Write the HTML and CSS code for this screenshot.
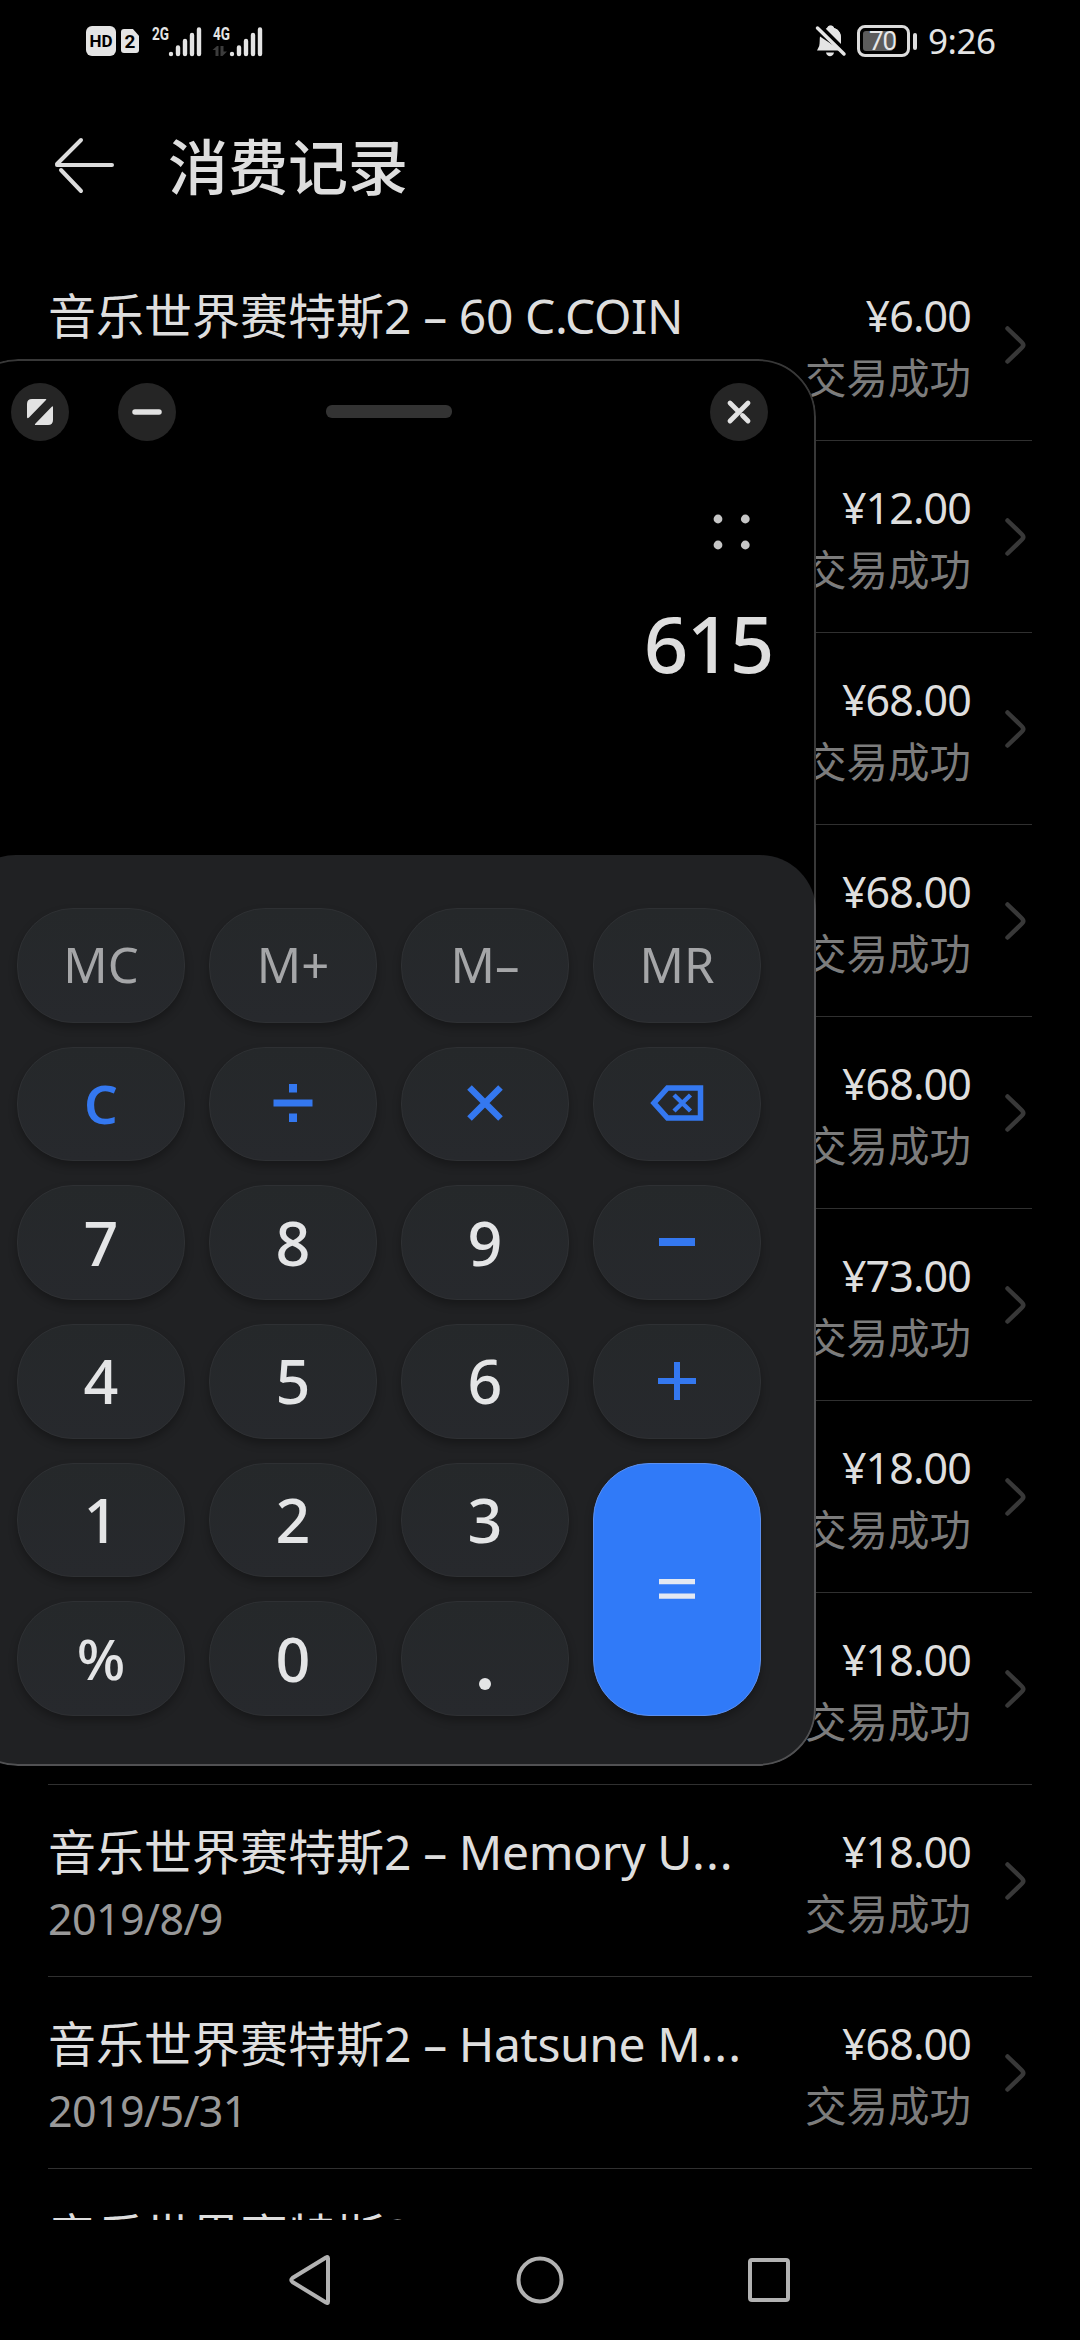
FILE: index.html
```html
<!DOCTYPE html>
<html lang="zh-CN">
<head>
<meta charset="utf-8">
<title>消费记录</title>
<link rel="stylesheet" href="styles.css">
</head>
<body>
<svg class="defs" width="0" height="0">
  <symbol id="chevron" viewBox="0 0 24 42"><path d="M4.500 4.500 19 18.500Q21.500 21 19 23.500L4.500 37.500" fill="none" stroke="currentColor" stroke-width="4.500" stroke-linecap="round"/></symbol>
</svg>
<div class="screen">
  <header class="status">
    <div class="status-left">
      <span class="hd">HD</span>
      <span class="sim">2</span>
      <svg class="signal" width="54" height="36" viewBox="0 0 54 36"><text class="net" x="2" y="17" textLength="17" lengthAdjust="spacingAndGlyphs">2G</text><g class="bars"><path d="M21 31v0M28 24.500V31M35 18V31M42 12V31M49 6.500V31"/></g></svg>
      <svg class="signal" width="54" height="36" viewBox="0 0 54 36"><text class="net" x="2" y="17" textLength="17" lengthAdjust="spacingAndGlyphs">4G</text><path d="M1.500 27 6 23h1.500v10H4.500v-6zM9.500 23v10h2l4.500-4.500h-3.500V23z" fill="#3c3c3c"/><g class="bars"><path d="M21 31v0M28 24.500V31M35 18V31M42 12V31M49 6.500V31"/></g></svg>
    </div>
    <div class="status-right">
      <svg width="32" height="34" viewBox="0 0 32 34"><path d="M9 6.500C10.500 5 11.500 4.500 12.500 4c.5-2 1.500-2.500 3-2.500s3 .5 3.500 2.500c5 1.500 7 5.500 7 10v5M5 12.500c-.5 2.500 0 6-.8 9.500L2 26.500h24zM11 28.500h8c-1 5-7 5-8 0z" fill="#e4e4e4"/><path d="M8.500 6.500 26 23V14c0-4.500-2-8.500-7-10-1-3-6-3-7 0z" fill="#e4e4e4"/><path d="M5 1.500 31 27.500" stroke="#000" stroke-width="3.500"/><path d="M2.500 4 29 30" stroke="#e4e4e4" stroke-width="3.500" stroke-linecap="round"/></svg>
      <div class="battery"><span class="level">70</span></div>
      <span class="tip"></span>
      <span class="clock">9:26</span>
    </div>
  </header>
  <div class="titlebar">
    <svg width="60" height="60" viewBox="0 0 60 60"><path d="M58 30H3M27 5 3 29M7 35 27 56" fill="none" stroke="#dcdcdc" stroke-width="4" stroke-linecap="round"/></svg>
    <h1>消费记录</h1>
  </div>
  <main class="list">
    <div class="row"><div class="item"><p class="name">音乐世界赛特斯<span class="latin">2 – 60 C.COIN</span></p></div><div class="pay"><p class="price">¥6.00</p><p class="state">交易成功</p></div><svg class="chev"><use href="#chevron"/></svg></div>
    <div class="row"><div class="item"></div><div class="pay"><p class="price">¥12.00</p><p class="state">交易成功</p></div><svg class="chev"><use href="#chevron"/></svg></div>
    <div class="row"><div class="item"></div><div class="pay"><p class="price">¥68.00</p><p class="state">交易成功</p></div><svg class="chev"><use href="#chevron"/></svg></div>
    <div class="row"><div class="item"></div><div class="pay"><p class="price">¥68.00</p><p class="state">交易成功</p></div><svg class="chev"><use href="#chevron"/></svg></div>
    <div class="row"><div class="item"></div><div class="pay"><p class="price">¥68.00</p><p class="state">交易成功</p></div><svg class="chev"><use href="#chevron"/></svg></div>
    <div class="row"><div class="item"></div><div class="pay"><p class="price">¥73.00</p><p class="state">交易成功</p></div><svg class="chev"><use href="#chevron"/></svg></div>
    <div class="row"><div class="item"></div><div class="pay"><p class="price">¥18.00</p><p class="state">交易成功</p></div><svg class="chev"><use href="#chevron"/></svg></div>
    <div class="row"><div class="item"></div><div class="pay"><p class="price">¥18.00</p><p class="state">交易成功</p></div><svg class="chev"><use href="#chevron"/></svg></div>
    <div class="row"><div class="item"><p class="name">音乐世界赛特斯<span class="latin">2 – Memory U<span class="dots">...</span></span></p><p class="date">2019/8/9</p></div><div class="pay"><p class="price">¥18.00</p><p class="state">交易成功</p></div><svg class="chev"><use href="#chevron"/></svg></div>
    <div class="row"><div class="item"><p class="name">音乐世界赛特斯<span class="latin">2 – Hatsune M<span class="dots">...</span></span></p><p class="date">2019/5/31</p></div><div class="pay"><p class="price">¥68.00</p><p class="state">交易成功</p></div><svg class="chev"><use href="#chevron"/></svg></div>
    <div class="row"><div class="item"><p class="name">音乐世界赛特斯<span class="latin">2 – H</span></p></div></div>
  </main>
  <nav class="nav">
    <svg width="50" height="60" viewBox="0 0 50 60"><path d="M42 8.500V51.500Q42 54 40 52.500L6.500 32Q4 30 6.500 28L40 7.500Q42 6 42 8.500z"/></svg>
    <svg width="60" height="60" viewBox="0 0 60 60"><circle cx="30" cy="30" r="21.500"/></svg>
    <svg width="50" height="60" viewBox="0 0 50 60"><rect x="6" y="10" width="38" height="40" rx="2"/></svg>
  </nav>

  <section class="calc">
    <div class="calc-head">
      <span class="round"><svg width="28" height="28" viewBox="0 0 28 28"><path d="M6 1H19.500Q21 1 20 2L3 19.500Q1 21 1 19V6Q1 1 6 1zM27 9.500V22Q27 27 22 27H10Q8 27 9.500 25.500L25.500 9Q27 7.500 27 9.500z" fill="#e2e2e2"/></svg></span>
      <span class="round second"><svg width="30" height="6" viewBox="0 0 30 6"><path d="M3 3H27" stroke="#e2e2e2" stroke-width="5.500" stroke-linecap="round"/></svg></span>
      <span class="handle"></span>
      <span class="round"><svg width="26" height="26" viewBox="0 0 26 26"><path d="M4 22 22 4M4 4 11.500 11.500M16.500 16.500 22 22" stroke="#e2e2e2" stroke-width="4.800" stroke-linecap="round"/></svg></span>
    </div>
    <div class="display">
      <svg width="38" height="36" viewBox="0 0 38 36" fill="#c6c6c6"><circle cx="5" cy="5" r="4.400"/><circle cx="32.300" cy="5" r="4.400"/><circle cx="5" cy="31" r="4.400"/><circle cx="32.300" cy="31" r="4.400"/></svg>
      <output>615</output>
    </div>
    <div class="pad">
      <button class="key mem">MC</button><button class="key mem">M+</button><button class="key mem">M–</button><button class="key mem">MR</button>
      <button class="key op">C</button>
      <button class="key"><svg width="40" height="40" viewBox="0 0 40 40"><path d="M.5 16.500h39v7H.5zM16 1h8v8.500h-8zM16 30.500h8V39h-8z" fill="#3478f0"/></svg></button>
      <button class="key"><svg width="40" height="40" viewBox="0 0 40 40"><path d="M4.500 4.500 35.500 35.500M35.500 4.500 4.500 35.500" stroke="#3478f0" stroke-width="6.500"/></svg></button>
      <button class="key"><svg width="56" height="38" viewBox="0 0 56 38"><path d="M51.500 4V34H18.500L5 19 18.500 4z" fill="none" stroke="#3478f0" stroke-width="5.500"/><path d="M25 11 41.500 27M41.500 11 25 27" stroke="#3478f0" stroke-width="4.500"/></svg></button>
      <button class="key">7</button><button class="key">8</button><button class="key">9</button>
      <button class="key"><svg width="36" height="8" viewBox="0 0 36 8"><path d="M0 0h36v8H0z" fill="#3478f0"/></svg></button>
      <button class="key">4</button><button class="key">5</button><button class="key">6</button>
      <button class="key"><svg width="38" height="38" viewBox="0 0 38 38"><path d="M0 19h38M19 0v38" stroke="#3478f0" stroke-width="6"/></svg></button>
      <button class="key">1</button><button class="key">2</button><button class="key">3</button>
      <button class="key equals"><svg width="36" height="20" viewBox="0 0 36 20"><path d="M0 0h36v5.200H0zM0 14.500h36v5.200H0z" fill="#e3e8f2"/></svg></button>
      <button class="key pct">%</button><button class="key">0</button>
      <button class="key point"><svg width="12" height="12" viewBox="0 0 12 12"><circle cx="6" cy="6" r="6" fill="#e4e5e6"/></svg></button>
    </div>
  </section>
</div>
</body>
</html>
```
FILE: styles.css
```css
* { box-sizing: border-box; margin: 0; padding: 0; }
body { background: #000; font-family: "Noto Sans", "Noto Sans CJK SC", sans-serif; color: #dedede; }
svg { display: block; flex: none; }
.defs { position: absolute; }
.screen { position: relative; width: 1080px; height: 2340px; overflow: hidden; display: flex; flex-direction: column; background: #000; }

.status { height: 82px; padding: 0 87px 0 86px; display: flex; justify-content: space-between; align-items: center; }
.status-left, .status-right { display: flex; align-items: center; }
.hd { width: 30px; height: 30px; border-radius: 6px; background: #e4e4e4; color: #000; font: 700 17px/30px "Roboto", sans-serif; text-align: center; }
.sim { width: 18px; height: 24px; margin-left: 5px; border-radius: 3px; background: #e4e4e4; color: #000; font: 700 19px/25px "Roboto", sans-serif; text-align: center; clip-path: polygon(0 0, 66% 0, 100% 28%, 100% 100%, 0 100%); }
.signal { margin-left: 11px; margin-right: -4px; }
.net { font: 700 19px "Roboto", sans-serif; fill: #e4e4e4; }
.bars { fill: none; stroke: #e4e4e4; stroke-width: 4.400; stroke-linecap: round; }
.battery { width: 53px; height: 32px; margin-left: 10px; border: 3px solid #dcdcdc; border-radius: 8px; padding: 3px; }
.level { display: block; width: 30px; height: 20px; border-radius: 3px; background: #5c5c5c; color: #e8e8e8; font: 400 26px/20px "Roboto", sans-serif; letter-spacing: -1px; text-indent: 6px; }
.tip { width: 4px; height: 17px; margin-left: 3px; border-radius: 2px; background: #dcdcdc; }
.clock { width: 65px; margin-left: 11px; font-size: 35px; line-height: 40px; letter-spacing: -.5px; white-space: nowrap; color: #e4e4e4; }

.titlebar { height: 166px; padding: 0 0 0 54px; display: flex; align-items: flex-start; gap: 54px; }
.titlebar svg { margin-top: 53px; }
h1 { font-size: 60px; font-weight: 500; line-height: 80px; margin-top: 42px; font-family: "Noto Sans CJK SC", sans-serif; }

.list { height: 1972px; overflow: hidden; padding: 0 48px; }
.row { height: 193px; margin-bottom: -1px; border-bottom: 1px solid #303030; display: flex; align-items: flex-start; }
.item { flex: 1; padding-top: 38px; white-space: nowrap; }
.name { font-size: 48px; line-height: 60px; }
.latin { letter-spacing: -.4px; }
.dots { letter-spacing: 1px; }
.date { font-size: 43px; line-height: 50px; margin-top: 12px; letter-spacing: -.6px; color: #999; }
.pay { text-align: right; padding-top: 43px; }
.price { font-size: 43px; line-height: 50px; letter-spacing: -.9px; }
.state { font-size: 41.500px; line-height: 56px; margin-top: 7px; color: #7c7c7c; font-family: "Noto Sans CJK SC", sans-serif; }
.chev { width: 24px; height: 42px; margin: 76px 5px 0 32px; color: #383838; }

.nav { height: 120px; display: flex; justify-content: center; align-items: center; gap: 174px; }
.nav svg { fill: none; stroke: #b2b2b2; stroke-width: 4; }

.calc { position: absolute; left: -40px; top: 359px; width: 856px; height: 1407px; border-radius: 58px; overflow: hidden; background: #000; display: flex; flex-direction: column; }
.calc::after { content: ""; position: absolute; inset: 0; border: 2px solid rgba(255, 255, 255, .22); border-radius: 58px; pointer-events: none; }
.calc-head { height: 106px; padding: 0 48px 0 51px; display: flex; align-items: center; }
.round { width: 58px; height: 58px; border-radius: 50%; background: #252525; display: flex; align-items: center; justify-content: center; }
.second { margin-left: 49px; }
.handle { width: 126px; height: 13px; margin: 0 auto 0 150px; border-radius: 6px; background: #333; }
.display { height: 390px; padding: 49px 43px 0 0; display: flex; flex-direction: column; align-items: flex-end; gap: 48px; }
.display svg { margin-right: 22px; }
output { font-size: 78px; line-height: 90px; letter-spacing: -1.500px; font-weight: 500; }
.pad { flex: 1; padding: 53px 54px 50px 57px; border-radius: 56px 56px 0 0; background: #202123; display: grid; grid-template-columns: repeat(4, 168px); grid-template-rows: repeat(6, 114.700px); gap: 24px; }
.key { border: 1.500px solid #2e3033; border-radius: 56px; background: linear-gradient(#25282a, #27292d); box-shadow: 0 5px 8px rgba(0, 0, 0, .28); color: #e4e5e6; font: 500 61px/1 "Noto Sans", sans-serif; padding-bottom: 1px; display: flex; align-items: center; justify-content: center; }
.mem { font-size: 49px; font-weight: 400; color: #a5a6a8; }
.op { font-size: 53px; font-weight: 600; color: #3478f0; }
.equals { grid-row: span 2; background: #307af8; border-color: #5b8fee; }
.pct { font-size: 57px; }
.point svg { margin-top: 52px; }
```
